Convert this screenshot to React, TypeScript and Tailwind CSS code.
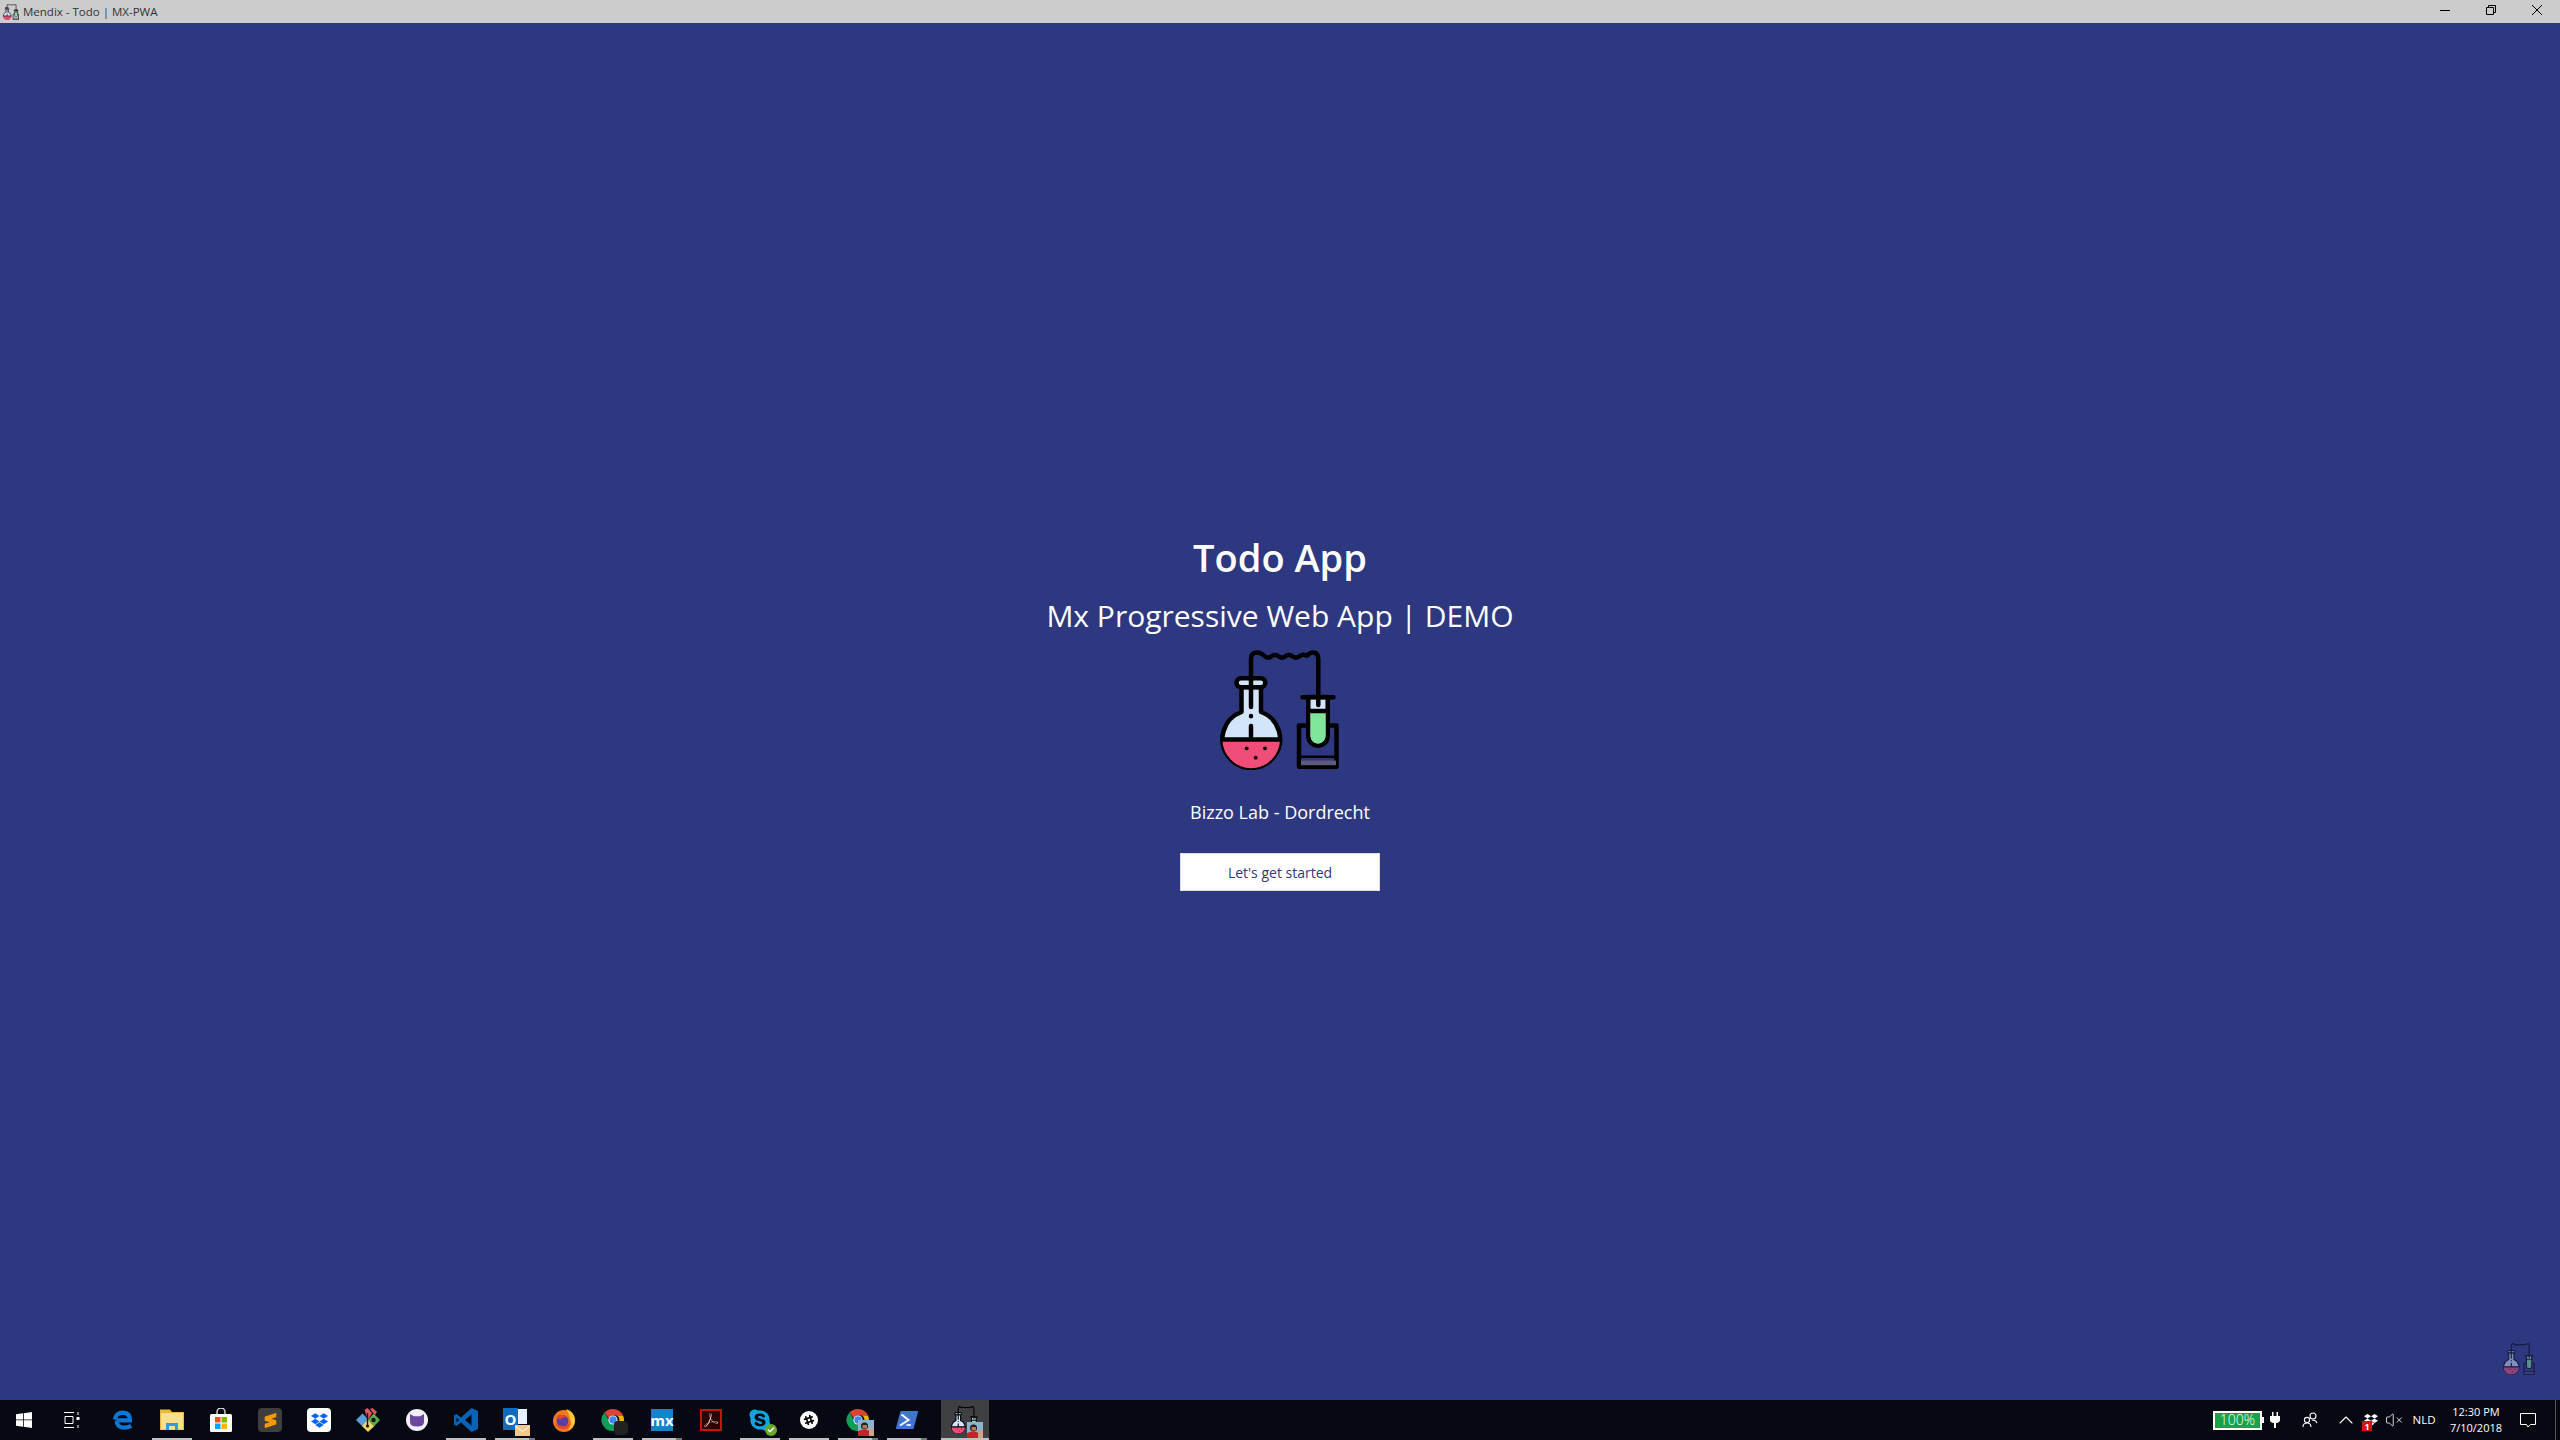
import type { ReactNode } from "react";
import { FaDropbox, FaSkype, FaSlackHash } from "react-icons/fa";
import { SiAdobeacrobatreader, SiSublimetext } from "react-icons/si";
import { Check, ChevronUp, VolumeX } from "lucide-react";

const sans = "font-['Open_Sans','Noto_Sans',sans-serif]";

function FlaskLogo({ className }: { className: string }) {
  return (
    <svg viewBox="0 0 120 120" className={className} fill="none" stroke="#000" strokeWidth="4.5" strokeLinecap="round" strokeLinejoin="round">
      <path d="M21.5 37 V62 A28.8 28.8 0 1 0 41 62 V37 Z" fill="#d3e5fb" />
      <path d="M2.4 89.5 H60 A28.8 28.8 0 0 1 2.4 89.5 Z" fill="#f04e78" stroke="none" />
      <path d="M3 89.5 H59.6" />
      <rect x="16.5" y="28.3" width="28.8" height="9" rx="4.5" fill="#d3e5fb" />
      <path d="M31 88 V76 M31 66 V66.2 M31 37 V57" />
      <g fill="#000" stroke="none">
        <circle cx="26.7" cy="98.3" r="1.9" />
        <circle cx="45" cy="98.3" r="1.9" />
        <circle cx="35.7" cy="107.7" r="1.9" />
      </g>
      <path d="M31 37 V9 Q31 2.6 37 2.6 Q41 2.6 45 6.5 Q48 8.6 51 6.6 Q55 3.4 59 6.6 Q62 8.6 65 6.6 Q69 3.4 73 6.6 Q76 8.6 79 6.6 Q83 3.4 87 5.8 Q90 2.6 93 2.6 Q98.3 2.6 98.3 9 V47" />
      <path d="M79 75.5 H116.5 V116.8 H79 Z" />
      <path d="M79 106.7 H116.5" strokeWidth="2.5" />
      <rect x="81" y="110.6" width="35" height="4.6" fill="#5d5b7d" stroke="none" />
      <path d="M88.3 47 V86 A9.7 9.7 0 0 0 107.7 86 V47 Z" fill="#d3e5fb" />
      <path d="M90.5 63 H105.5 V86 A7.5 7.5 0 0 1 90.5 86 Z" fill="#7fe59a" stroke="none" />
      <path d="M88.3 61 H107.7 M98.3 47 V55" />
      <path d="M82.5 47.3 H113.5" />
    </svg>
  );
}

function WindowsIcon() {
  return (
    <svg viewBox="0 0 16 16" className="h-4 w-4" fill="#fff">
      <path d="M0 2.3 7 1.3V7.5H0ZM7.8 1.2 16 0V7.5H7.8ZM0 8.3H7V14.7L0 13.7ZM7.8 8.3H16V16L7.8 14.8Z" />
    </svg>
  );
}

function TaskViewIcon() {
  return (
    <svg viewBox="0 0 16 16" className="h-4 w-4" fill="none" stroke="#fff" strokeWidth="1">
      <path d="M0 .5H10M0 15.5H10M1 4.5H9V11.5H1ZM14 0V3M14 13V16" />
      <rect x="12.5" y="5" width="3" height="3" fill="#fff" stroke="none" />
    </svg>
  );
}

function EdgeIcon() {
  return (
    <svg viewBox="0 0 24 24" className="h-[22px] w-[22px]" fill="none" stroke="#0a78d6" strokeWidth="4.6">
      <path d="M5.5 12.5H19.6Q19.8 4.2 12 4Q4.5 4.2 3 11.5M5.2 12.5Q5 20.2 13 20.4Q17 20.5 21 18.4" />
    </svg>
  );
}

function ExplorerIcon() {
  return (
    <svg viewBox="0 0 24 24" className="h-6 w-6">
      <path d="M0 1.5H10L12 4H24V22H0Z" fill="#e8b93f" />
      <path d="M1 5H23V21.5H1Z" fill="#fbe08b" />
      <path d="M6 22V15H18V22H15V18H9V22Z" fill="#2a9fe0" />
    </svg>
  );
}

function StoreIcon() {
  return (
    <svg viewBox="0 0 24 24" className="h-6 w-6">
      <path d="M8 6V4A4 4 0 0 1 16 4V6" fill="none" stroke="#ddd" strokeWidth="1.4" />
      <rect x="1" y="6" width="22" height="18" rx="1.5" fill="#fff" />
      <rect x="6" y="9" width="5.5" height="5.5" fill="#f25022" />
      <rect x="12.5" y="9" width="5.5" height="5.5" fill="#7fba00" />
      <rect x="6" y="15.5" width="5.5" height="5.5" fill="#00a4ef" />
      <rect x="12.5" y="15.5" width="5.5" height="5.5" fill="#ffb900" />
    </svg>
  );
}

function KrakenIcon() {
  return (
    <svg viewBox="0 0 24 24" className="h-6 w-6">
      <path d="M6.5 5.5 13 12 6.5 18.5 0 12Z" fill="#5b9bd8" />
      <path d="M12 11.5 18.5 18 12 24 6 18Z" fill="#f3d66b" />
      <path d="M17.5 5.5 24 12 18 18.500 12 12Z" fill="#5fa84c" />
      <path d="M8.5 2 11.500 0 16 5 12 12Z" fill="#e0585a" />
      <path d="M14 1 16.500 0 21 4 19 7Z" fill="#e0585a" />
      <circle cx="17.500" cy="12" r="2.200" fill="#10161e" />
      <path d="M11.500 5V17" stroke="#10161e" strokeWidth="1.400" />
      <circle cx="11.500" cy="18" r="1.600" fill="#10161e" />
    </svg>
  );
}

function CatIcon() {
  return (
    <svg viewBox="0 0 24 24" className="h-6 w-6">
      <circle cx="12" cy="12" r="11" fill="#f3eff8" />
      <path d="M5 6 9 8.300H15L19 6V14Q19 18.500 12 18.500T5 14Z" fill="#6b479f" />
    </svg>
  );
}

function VsCodeIcon() {
  return (
    <svg viewBox="0 0 24 24" className="h-6 w-6">
      <path fillRule="evenodd" d="M17.500 0 24 3V21L17.500 24 7 14.500 2.500 18 0 16.500V7.500L2.500 6 7 9.500ZM17.500 6.500 11 12 17.500 17.500ZM2.500 9.500V14.500L5 12Z" fill="#0a62b4" />
    </svg>
  );
}

function OutlookIcon() {
  return (
    <div className="relative h-6 w-6">
      <div className="absolute left-[5px] top-[1px] h-[15px] w-[19px] bg-[#e8f2fb]" />
      <div className={`absolute left-0 top-0 flex h-[22px] w-[15px] items-center justify-center bg-[#0f6cbd] text-[15px] font-bold text-white ${sans}`}>O</div>
      <svg viewBox="0 0 15 11" className="absolute -bottom-[4px] -right-[3px] h-[11px] w-[15px]">
        <rect width="15" height="11" fill="#f4c78a" />
        <path d="M0 1 7.500 6.500 15 1" fill="none" stroke="#fff" strokeWidth="1" />
      </svg>
    </div>
  );
}

function FirefoxIcon() {
  return (
    <svg viewBox="0 0 24 24" className="h-6 w-6">
      <circle cx="12" cy="13" r="11" fill="#f27a1d" />
      <path d="M14 1Q23 4 23 12Q22 20 16 22Q21 16 18 10Q17 5 14 1Z" fill="#ffc93c" />
      <circle cx="10.500" cy="13" r="6" fill="#5b3ea3" />
      <path d="M4 8Q10 5 15 9Q10 9 9 11Q6 12 4 8Z" fill="#e7482a" />
      <path d="M3 15Q6 22 13 21Q18 20 18 14Q15 19 10 18Q6 18 3 15Z" fill="#e7482a" />
    </svg>
  );
}

function ChromeIcon() {
  return (
    <svg viewBox="0 0 24 24" className="h-6 w-6">
      <path d="M12 1A11 11 0 0 1 22 7.500H12A4.500 4.500 0 0 0 7.800 10.500L3.500 4.500A11 11 0 0 1 12 1Z" fill="#db4437" />
      <path d="M22 7.500A11 11 0 0 1 12.500 23L16 15.500A4.500 4.500 0 0 0 16 7.500Z" fill="#f4b400" />
      <path d="M12.500 23A11 11 0 0 1 3.500 4.500L8 12.500A4.500 4.500 0 0 0 15.500 15Z" fill="#0f9d58" />
      <circle cx="12" cy="12" r="4.600" fill="#fff" />
      <circle cx="12" cy="12" r="3.700" fill="#4285f4" />
    </svg>
  );
}

function Avatar() {
  return (
    <svg viewBox="0 0 16 16" className="absolute -bottom-[4px] -right-[4px] h-4 w-4">
      <rect width="16" height="16" fill="#8db4cf" />
      <circle cx="6.500" cy="6" r="3.500" fill="#2b1a14" />
      <rect x="4.500" y="5" width="4.500" height="3.500" fill="#b87a58" />
      <path d="M0 16V11Q6 8 12 11V16Z" fill="#c9202a" />
      <rect x="11" y="8" width="5" height="8" fill="#c9a58a" />
    </svg>
  );
}

function PowerShellIcon() {
  return (
    <svg viewBox="0 0 24 24" className="h-6 w-6">
      <path d="M5.500 3H23.300L18.500 21H.7Z" fill="#3f74cf" />
      <path d="M6.500 6.500 13.500 12 5 17.500" fill="none" stroke="#fff" strokeWidth="2" />
      <path d="M11.500 17H16" stroke="#fff" strokeWidth="1.600" />
    </svg>
  );
}

function Slot({ children, bar, split }: { children: ReactNode; bar?: boolean; split?: boolean }) {
  return (
    <div className="relative flex h-10 w-[49px] items-center justify-center">
      {children}
      {bar && (
        <div className="absolute bottom-0 left-[4.5px] flex h-[2px] w-10">
          <div className="flex-1 bg-[#c0c0c0]" />
          {split && <div className="w-[6px] bg-[#777]" />}
        </div>
      )}
    </div>
  );
}

function Tray() {
  return (
    <div className={`ml-auto flex h-10 items-center text-white ${sans}`}>
      <div className="flex items-center">
        <div className="flex h-[19px] w-[49px] items-center justify-center border-2 border-white bg-[#16a34a] text-[14px] font-light leading-none">100%</div>
        <div className="h-[6px] w-[2px] bg-white" />
      </div>
      <div className="ml-[3px] flex w-[16px] justify-center">
        <svg viewBox="0 0 10 16" className="h-4 w-[10px]" fill="#fff">
          <path d="M2 0H3.500V4H6.500V0H8V4H10V8Q10 10.500 6 11V16H4V11Q0 10.500 0 8V4H2Z" />
        </svg>
      </div>
      <div className="ml-[17px] flex w-[20px] justify-center">
        <svg viewBox="0 0 16 16" className="h-4 w-4" fill="none" stroke="#fff" strokeWidth="1.1">
          <circle cx="11" cy="4" r="3" />
          <circle cx="5" cy="8" r="2.600" />
          <path d="M1 15Q1 11 5 11T9 15M10 8Q14 8 15 11" />
        </svg>
      </div>
      <ChevronUp className="ml-[14px] h-6 w-6" strokeWidth={1.1} />
      <div className="relative ml-[4px] flex w-[18px] justify-center">
        <FaDropbox className="h-[14px] w-[14px]" />
        <div className="absolute -bottom-[4px] left-0 flex h-[10px] w-[10px] items-center justify-center bg-[#d0141c] text-[9px] font-bold leading-none">1</div>
      </div>
      <VolumeX className="ml-[5px] h-[18px] w-[18px]" strokeWidth={1.1} />
      <div className="ml-[8px] w-[26px] text-center text-[11.5px]">NLD</div>
      <div className="ml-[9px] w-[60px] text-center text-[11px] leading-[16px]">
        <div>12:30 PM</div>
        <div>7/10/2018</div>
      </div>
      <div className="ml-[12px] flex w-[20px] justify-center">
        <svg viewBox="0 0 16 16" className="h-4 w-4" fill="none" stroke="#fff" strokeWidth="1">
          <path d="M.5 1.500H15.500V12.500H10.500L8 15 6.500 12.500H.5Z" />
        </svg>
      </div>
      <div className="ml-[17px] h-10 w-[1px] bg-[#555]" />
      <div className="w-[4px]" />
    </div>
  );
}

function Taskbar() {
  return (
    <div className="flex h-10 shrink-0 bg-[#060812]">
      <div className="flex h-10 w-12 items-center justify-center">
        <WindowsIcon />
      </div>
      <div className="mr-[2.5px] flex h-10 w-12 items-center justify-center">
        <TaskViewIcon />
      </div>
      <Slot>
        <EdgeIcon />
      </Slot>
      <Slot bar>
        <ExplorerIcon />
      </Slot>
      <Slot>
        <StoreIcon />
      </Slot>
      <Slot>
        <div className="flex h-6 w-6 items-center justify-center rounded-sm bg-[#3e3e3e]">
          <SiSublimetext className="h-[15px] w-[15px] text-[#ff9800]" />
        </div>
      </Slot>
      <Slot>
        <div className="flex h-6 w-6 items-center justify-center rounded-sm bg-white">
          <FaDropbox className="h-[17px] w-[17px] text-[#0d62f0]" />
        </div>
      </Slot>
      <Slot>
        <KrakenIcon />
      </Slot>
      <Slot>
        <CatIcon />
      </Slot>
      <Slot bar>
        <VsCodeIcon />
      </Slot>
      <Slot bar split>
        <OutlookIcon />
      </Slot>
      <Slot>
        <FirefoxIcon />
      </Slot>
      <Slot bar>
        <div className="relative h-6 w-6">
          <ChromeIcon />
          <div className="absolute -bottom-[3px] -right-[3px] h-[14px] w-[14px] rounded-sm bg-[#222]" />
        </div>
      </Slot>
      <Slot bar split>
        <div className={`flex h-[22px] w-[22px] items-center justify-center bg-[#1583c9] text-[15px] font-bold leading-none text-white ${sans}`}>mx</div>
      </Slot>
      <Slot>
        <div className="flex h-[22px] w-[22px] items-center justify-center border-2 border-[#c8140c] bg-[#2a0503]">
          <SiAdobeacrobatreader className="h-[14px] w-[14px] text-[#e8c8c0]" />
        </div>
      </Slot>
      <Slot bar>
        <div className="relative">
          <FaSkype className="h-6 w-6 text-[#14a3dc]" />
          <div className="absolute -bottom-[4px] -right-[5px] flex h-3 w-3 items-center justify-center rounded-full bg-[#6aa82c]">
            <Check className="h-2 w-2 text-white" strokeWidth={4} />
          </div>
        </div>
      </Slot>
      <Slot bar>
        <div className="flex h-[18px] w-[18px] items-center justify-center rounded-full bg-white">
          <FaSlackHash className="h-3 w-3 text-black" />
        </div>
      </Slot>
      <Slot bar split>
        <div className="relative h-6 w-6">
          <ChromeIcon />
          <Avatar />
        </div>
      </Slot>
      <Slot bar split>
        <PowerShellIcon />
      </Slot>
      <div className="relative ml-[9.5px] flex h-10 w-12 items-center justify-center bg-[#3f4044]">
        <div className="relative h-7 w-7">
          <FlaskLogo className="h-7 w-7" />
          <Avatar />
        </div>
        <div className="absolute bottom-0 left-0 h-[2px] w-full bg-[#c0c0c0]" />
      </div>
      <Tray />
    </div>
  );
}

export default function App() {
  return (
    <div className={`flex h-[1440px] w-[2560px] flex-col overflow-hidden ${sans}`}>
      <div className="flex h-[23px] shrink-0 items-center bg-[#cccccc] pl-[3px] text-[11.5px] text-[#333]">
        <FlaskLogo className="mr-[4px] h-[16px] w-[16px]" />
        <span>Mendix - Todo | MX-PWA</span>
        <div className="mb-[3px] ml-auto mr-[18px] flex items-center gap-9">
          <svg viewBox="0 0 10 10" className="h-[10px] w-[10px]" fill="none" stroke="#000" strokeWidth="1">
            <path d="M0 5.500H10" />
          </svg>
          <svg viewBox="0 0 10 10" className="h-[10px] w-[10px]" fill="none" stroke="#000" strokeWidth="1">
            <path d="M2.500 2.500V.5H9.500V7.500H7.500M.5 2.500H7.500V9.500H.5Z" />
          </svg>
          <svg viewBox="0 0 10 10" className="h-[10px] w-[10px]" fill="none" stroke="#000" strokeWidth="1">
            <path d="M0 0 10 10M10 0 0 10" />
          </svg>
        </div>
      </div>
      <main className="relative flex flex-1 flex-col items-center justify-center bg-[#2e3880] pb-[1px] text-white">
        <h1 className="text-[38px] font-semibold leading-[52px]">Todo App</h1>
        <h2 className="mt-[12px] text-[30px] leading-[42px]">Mx Progressive Web App | DEMO</h2>
        <FlaskLogo className="mt-[13px] h-[120px] w-[120px]" />
        <p className="mt-[30px] text-[18px] leading-[24px]">Bizzo Lab - Dordrecht</p>
        <button className="mt-[29px] h-[38px] w-[200px] border border-[#dddddd] bg-white text-[14px] text-[#2e3880]">Let's get started</button>
        <FlaskLogo className="absolute bottom-[25px] right-[25px] h-8 w-8 opacity-50" />
      </main>
      <Taskbar />
    </div>
  );
}
